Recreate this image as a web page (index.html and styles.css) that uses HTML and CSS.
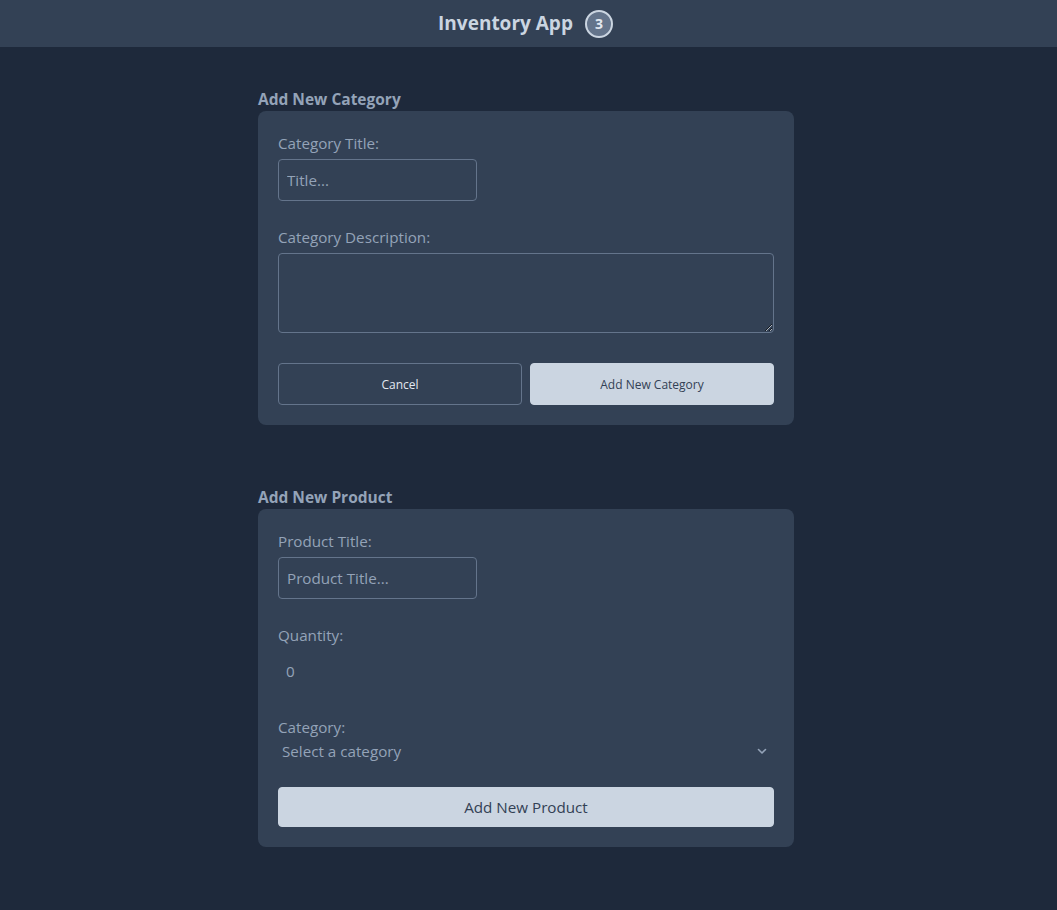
FILE: index.html
```html
<!DOCTYPE html>
<html lang="en">
<head>
<meta charset="utf-8">
<title>Inventory App</title>
<link rel="stylesheet" href="styles.css">
</head>
<body>
<header class="topbar">
  <h1 class="app-title">Inventory App</h1>
  <span class="badge">3</span>
</header>
<main class="main">
  <section class="section">
    <h2 class="section-title">Add New Category</h2>
    <form class="card">
      <label class="label" for="cat-title">Category Title:</label>
      <input class="input input-short" id="cat-title" type="text" placeholder="Title...">
      <label class="label label-spaced" for="cat-desc">Category Description:</label>
      <textarea class="textarea" id="cat-desc"></textarea>
      <div class="btn-row">
        <button type="button" class="btn btn-outline">Cancel</button>
        <button type="button" class="btn btn-solid">Add New Category</button>
      </div>
    </form>
  </section>
  <section class="section section-second">
    <h2 class="section-title">Add New Product</h2>
    <form class="card">
      <label class="label" for="prod-title">Product Title:</label>
      <input class="input input-short" id="prod-title" type="text" placeholder="Product Title...">
      <label class="label label-spaced" for="qty">Quantity:</label>
      <input class="input-plain" id="qty" type="number" value="0">
      <label class="label label-spaced" for="cat">Category:</label>
      <div class="select-wrap">
        <select class="select" id="cat">
          <option>Select a category</option>
        </select>
        <svg class="chevron" width="12" height="12" viewBox="0 0 12 12" aria-hidden="true"><path d="M2.5 4.5 L6 8 L9.5 4.5" fill="none" stroke="#94a3b8" stroke-width="1.6" stroke-linecap="round" stroke-linejoin="round"/></svg>
      </div>
      <button type="button" class="btn btn-solid btn-wide">Add New Product</button>
    </form>
  </section>
</main>
</body>
</html>
```

FILE: styles.css
```css
* { box-sizing: border-box; }
html, body { margin: 0; padding: 0; }
body {
  background: #1e293b;
  font-family: "Open Sans", "Noto Sans", sans-serif;
  color: #94a3b8;
  min-height: 910px;
}
.topbar {
  height: 47px;
  background: #334155;
  display: flex;
  align-items: center;
  justify-content: center;
  gap: 12px;
  padding-right: 6px;
}
.app-title {
  margin: 0;
  font-size: 19px;
  font-weight: 700;
  color: #cbd5e1;
  line-height: 1;
}
.badge {
  width: 28px;
  height: 28px;
  border-radius: 50%;
  border: 2px solid #cbd5e1;
  background: #64748b;
  color: #e2e8f0;
  font-size: 14px;
  font-weight: 700;
  display: flex;
  align-items: center;
  justify-content: center;
}
.main {
  width: 536px;
  margin-left: calc(50% - 270.5px);
  padding-top: 40px;
}
.section-second { margin-top: 60px; }
.section-title {
  margin: 0;
  font-size: 15.5px;
  font-weight: 700;
  line-height: 24px;
  color: #94a3b8;
}
.card {
  background: #334155;
  border-radius: 8px;
  padding: 20px;
  display: flex;
  flex-direction: column;
  align-items: flex-start;
}
.label {
  font-size: 15.2px;
  line-height: 24px;
  color: #94a3b8;
  margin-bottom: 4px;
}
.label-spaced { margin-top: 24px; }
.input {
  height: 42px;
  background: transparent;
  border: 1px solid #64748b;
  border-radius: 4px;
  padding: 0 8px;
  font-family: inherit;
  font-size: 15.2px;
  color: #94a3b8;
  outline: none;
}
.input::placeholder { color: #94a3b8; }
.input-short { width: 199px; }
.textarea {
  width: 100%;
  height: 80px;
  background: transparent;
  border: 1px solid #64748b;
  border-radius: 4px;
  font-family: inherit;
  color: #94a3b8;
  resize: vertical;
}
.btn-row {
  width: 100%;
  display: flex;
  gap: 8px;
  margin-top: 30px;
}
.btn {
  flex: 1;
  height: 42px;
  border-radius: 4px;
  font-family: inherit;
  font-size: 12px;
  cursor: pointer;
}
.btn-outline {
  background: transparent;
  border: 1px solid #64748b;
  color: #e2e8f0;
}
.btn-solid {
  background: #cbd5e1;
  border: 1px solid #cbd5e1;
  color: #334155;
}
.input-plain {
  height: 40px;
  width: 199px;
  background: transparent;
  border: none;
  padding: 0 8px;
  font-family: inherit;
  font-size: 15.2px;
  color: #94a3b8;
  outline: none;
  -moz-appearance: textfield;
}
.input-plain::-webkit-inner-spin-button,
.input-plain::-webkit-outer-spin-button { -webkit-appearance: none; margin: 0; }
.select-wrap {
  position: relative;
  width: 100%;
  margin-top: -4px;
}
.select {
  width: 100%;
  height: 24px;
  appearance: none;
  -webkit-appearance: none;
  background: transparent;
  border: none;
  padding: 0 4px;
  font-family: inherit;
  font-size: 15.2px;
  color: #94a3b8;
  outline: none;
}
.chevron {
  position: absolute;
  right: 6px;
  top: 6px;
  pointer-events: none;
}
.btn-wide {
  flex: none;
  width: 100%;
  height: 40px;
  margin-top: 24px;
  font-size: 15.2px;
}
```
